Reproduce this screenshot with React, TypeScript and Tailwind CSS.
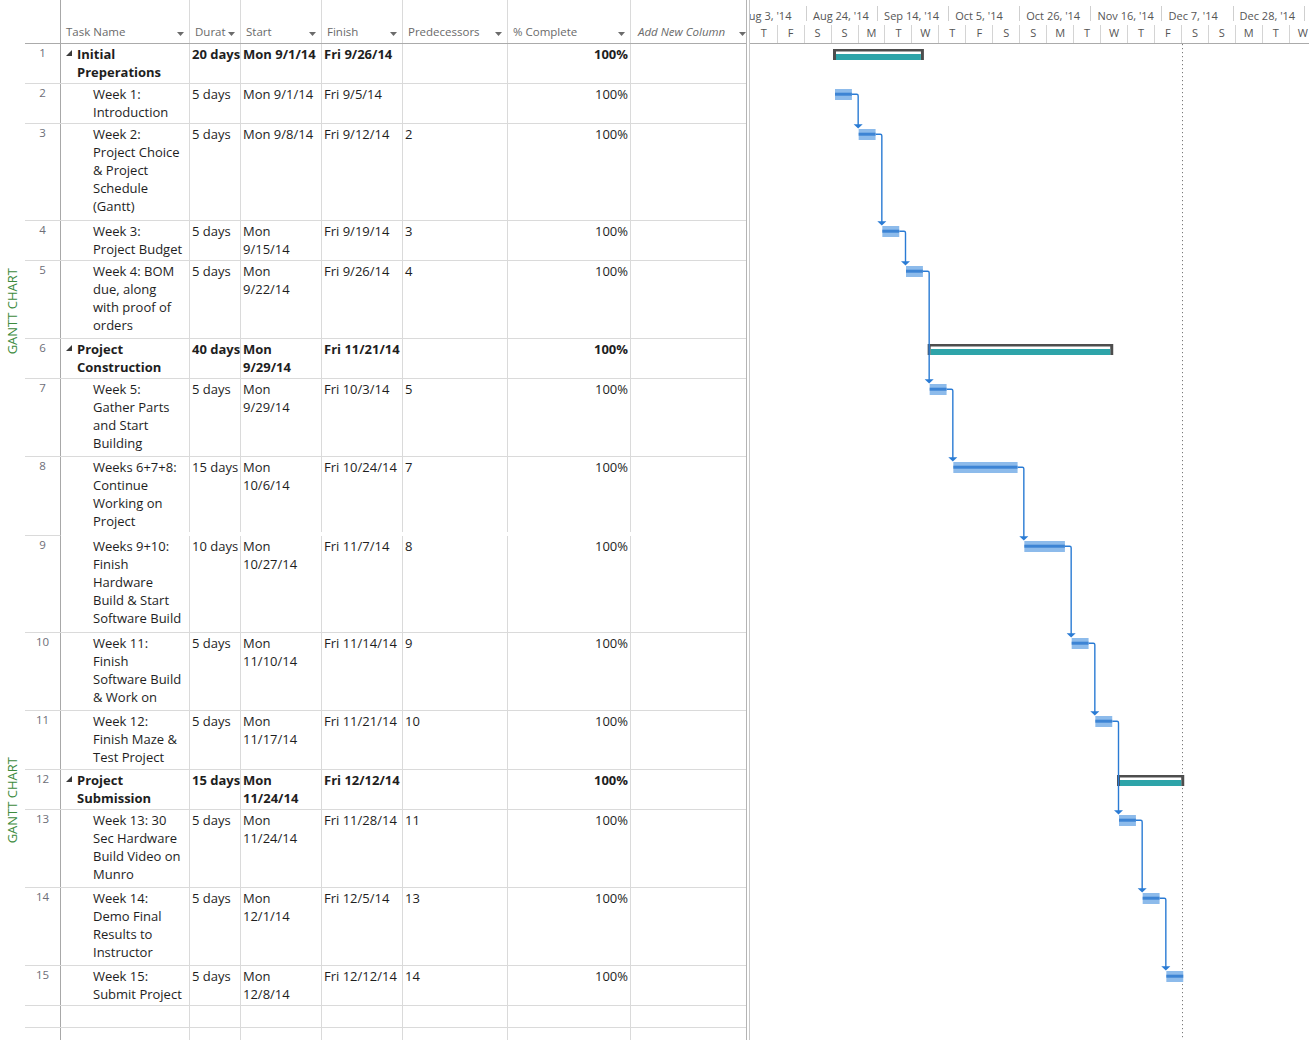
import React from "react";

type Row = {
  id: number;
  h: string;
  summary?: boolean;
  name: string[];
  dur: string;
  start: string[];
  finish: string;
  pred: string;
};

const rows: Row[] = [
  { id: 1, h: "h-[40px]", summary: true, name: ["Initial", "Preperations"], dur: "20 days", start: ["Mon 9/1/14"], finish: "Fri 9/26/14", pred: "" },
  { id: 2, h: "h-[40px]", name: ["Week 1:", "Introduction"], dur: "5 days", start: ["Mon 9/1/14"], finish: "Fri 9/5/14", pred: "" },
  { id: 3, h: "h-[97px]", name: ["Week 2:", "Project Choice", "& Project", "Schedule", "(Gantt)"], dur: "5 days", start: ["Mon 9/8/14"], finish: "Fri 9/12/14", pred: "2" },
  { id: 4, h: "h-[40px]", name: ["Week 3:", "Project Budget"], dur: "5 days", start: ["Mon", "9/15/14"], finish: "Fri 9/19/14", pred: "3" },
  { id: 5, h: "h-[78px]", name: ["Week 4: BOM", "due, along", "with proof of", "orders"], dur: "5 days", start: ["Mon", "9/22/14"], finish: "Fri 9/26/14", pred: "4" },
  { id: 6, h: "h-[40px]", summary: true, name: ["Project", "Construction"], dur: "40 days", start: ["Mon", "9/29/14"], finish: "Fri 11/21/14", pred: "" },
  { id: 7, h: "h-[78px]", name: ["Week 5:", "Gather Parts", "and Start", "Building"], dur: "5 days", start: ["Mon", "9/29/14"], finish: "Fri 10/3/14", pred: "5" },
  { id: 8, h: "h-[75px]", name: ["Weeks 6+7+8:", "Continue", "Working on", "Project"], dur: "15 days", start: ["Mon", "10/6/14"], finish: "Fri 10/24/14", pred: "7" },
  { id: 9, h: "h-[97px]", name: ["Weeks 9+10:", "Finish", "Hardware", "Build & Start", "Software Build"], dur: "10 days", start: ["Mon", "10/27/14"], finish: "Fri 11/7/14", pred: "8" },
  { id: 10, h: "h-[78px]", name: ["Week 11:", "Finish", "Software Build", "& Work on"], dur: "5 days", start: ["Mon", "11/10/14"], finish: "Fri 11/14/14", pred: "9" },
  { id: 11, h: "h-[59px]", name: ["Week 12:", "Finish Maze &", "Test Project"], dur: "5 days", start: ["Mon", "11/17/14"], finish: "Fri 11/21/14", pred: "10" },
  { id: 12, h: "h-[40px]", summary: true, name: ["Project", "Submission"], dur: "15 days", start: ["Mon", "11/24/14"], finish: "Fri 12/12/14", pred: "" },
  { id: 13, h: "h-[78px]", name: ["Week 13: 30", "Sec Hardware", "Build Video on", "Munro"], dur: "5 days", start: ["Mon", "11/24/14"], finish: "Fri 11/28/14", pred: "11" },
  { id: 14, h: "h-[78px]", name: ["Week 14:", "Demo Final", "Results to", "Instructor"], dur: "5 days", start: ["Mon", "12/1/14"], finish: "Fri 12/5/14", pred: "13" },
  { id: 15, h: "h-[40px]", name: ["Week 15:", "Submit Project"], dur: "5 days", start: ["Mon", "12/8/14"], finish: "Fri 12/12/14", pred: "14" },
];

// y of the grid line above each row (row index 1..15)
const LINES = [43, 83, 123, 220, 260, 338, 378, 456, 535, 632, 710, 769, 809, 887, 965, 1005];

// calendar day spans from Mon 9/1/14
const spans: Record<number, [number, number]> = {
  1: [0, 26],
  2: [0, 5],
  3: [7, 12],
  4: [14, 19],
  5: [21, 26],
  6: [28, 82],
  7: [28, 33],
  8: [35, 54],
  9: [56, 68],
  10: [70, 75],
  11: [77, 82],
  12: [84, 103],
  13: [84, 89],
  14: [91, 96],
  15: [98, 103],
};

const links: [number, number][] = [
  [2, 3], [3, 4], [4, 5], [5, 7], [7, 8], [8, 9], [9, 10], [10, 11], [11, 13], [13, 14], [14, 15],
];

const DAY = 3.381;
const X0 = 85; // svg x of Mon 9/1/14
const BODY_TOP = 44;

const dx = (d: number) => X0 + d * DAY;
const barTop = (id: number) => LINES[id - 1] + 6 - BODY_TOP;

const GRID = "grid grid-cols-[36px_129px_51px_81px_81px_105px_123px_115px] shrink-0";

function HeaderArrow() {
  return (
    <svg width="7" height="4" viewBox="0 0 7 4" className="shrink-0 mt-[8px]">
      <path d="M0 0H7L3.5 4Z" fill="#6b6b6b" />
    </svg>
  );
}

function SummaryTri() {
  return (
    <svg width="6" height="6" viewBox="0 0 6 6" className="shrink-0 mt-[5px]">
      <path d="M6 0V6H0Z" fill="#3a3a3a" />
    </svg>
  );
}

function Lines({ lines }: { lines: string[] }) {
  return (
    <>
      {lines.map((l, i) => (
        <div key={i} className="whitespace-nowrap">
          {l}
        </div>
      ))}
    </>
  );
}

function HeaderCell({ label, italic, last }: { label: string; italic?: boolean; last?: boolean }) {
  return (
    <div
      className={`flex items-start justify-between pt-[24px] ${last ? "pl-[7px] pr-0" : "border-r border-[#dadada] pl-[5px] pr-[5px]"}`}
    >
      <span className={`text-[11.5px] leading-[16px] text-[#6a6a6a] whitespace-nowrap ${italic ? "italic" : ""}`}>{label}</span>
      <HeaderArrow />
    </div>
  );
}

function TableRow({ r, noBottom }: { r: Row; noBottom?: boolean }) {
  const weight = r.summary ? "font-bold" : "font-normal";
  return (
    <div className={`${GRID} ${r.h} ${noBottom ? "" : "border-b border-[#dadada]"} text-[13px] leading-[18px] text-[#1e1e1e]`}>
      <div className="border-r border-[#a8a8a8] text-center text-[11.5px] leading-[18px] pt-0 text-[#6e6e78]">{r.id}</div>
      <div className={`border-r border-[#dadada] pt-[1px] overflow-hidden ${weight} ${r.summary ? "flex pl-[5px]" : "pl-[32px]"}`}>
        {r.summary ? (
          <>
            <SummaryTri />
            <div className="ml-[5px]">
              <Lines lines={r.name} />
            </div>
          </>
        ) : (
          <Lines lines={r.name} />
        )}
      </div>
      <div className={`border-r border-[#dadada] pt-[1px] pl-[2px] overflow-hidden whitespace-nowrap ${weight}`}>{r.dur}</div>
      <div className={`border-r border-[#dadada] pt-[1px] pl-[2px] overflow-hidden ${weight}`}>
        <Lines lines={r.start} />
      </div>
      <div className={`border-r border-[#dadada] pt-[1px] pl-[2px] overflow-hidden whitespace-nowrap ${weight}`}>{r.finish}</div>
      <div className={`border-r border-[#dadada] pt-[1px] pl-[2px] ${weight}`}>{r.pred}</div>
      <div className={`border-r border-[#dadada] pt-[1px] pr-[2px] text-right ${weight}`}>100%</div>
      <div />
    </div>
  );
}

function GapRow() {
  return (
    <div className={`${GRID} h-[4px]`}>
      <div className="border-r border-b border-[#a8a8a8] border-b-[#dadada]" />
      <div />
      <div />
      <div />
      <div />
      <div />
      <div />
      <div />
    </div>
  );
}

function EmptyRow({ h, bottom }: { h: string; bottom?: boolean }) {
  return (
    <div className={`${GRID} ${h} ${bottom ? "border-b border-[#dadada]" : ""}`}>
      <div className="border-r border-[#a8a8a8]" />
      <div className="border-r border-[#dadada]" />
      <div className="border-r border-[#dadada]" />
      <div className="border-r border-[#dadada]" />
      <div className="border-r border-[#dadada]" />
      <div className="border-r border-[#dadada]" />
      <div className="border-r border-[#dadada]" />
      <div />
    </div>
  );
}

const topLabels = ["Aug 3, '14", "Aug 24, '14", "Sep 14, '14", "Oct 5, '14", "Oct 26, '14", "Nov 16, '14", "Dec 7, '14", "Dec 28, '14", "Jan 18, '15"];
const dayLetters = "TFSSMTWTFSSMTWTFSSMTW".split("");

function GanttHeader() {
  return (
    <div className="h-[44px] shrink-0 border-b border-[#ababab] overflow-hidden text-[11px] text-[#555]">
      <div className="h-[25px] flex ml-[-14.1px]">
        {topLabels.map((l, i) => (
          <div key={i} className="w-[71.1px] shrink-0 flex">
            <div className="flex-1 pl-[6px] pt-[9px] leading-[14px] whitespace-nowrap overflow-hidden">{l}</div>
            <div className="w-px h-[15px] mt-[6px] bg-[#cfcfcf]" />
          </div>
        ))}
      </div>
      <div className="h-[18px] flex pl-[0.7px]">
        {dayLetters.map((d, i) => (
          <div key={i} className="w-[26.96px] shrink-0 border-r border-[#d4d4d4] text-center leading-[16px]">
            {d}
          </div>
        ))}
      </div>
    </div>
  );
}

function GanttBody() {
  const taskIds = [2, 3, 4, 5, 7, 8, 9, 10, 11, 13, 14, 15];
  const summaryIds = [1, 6, 12];
  return (
    <svg width="559" height="996" viewBox="0 0 559 996" className="block shrink-0">
      {/* status date dotted line */}
      <line x1="432.5" y1="0" x2="432.5" y2="996" stroke="#7a7a7a" strokeWidth="1" strokeDasharray="1.2 2.8" />
      {summaryIds.map((id) => {
        const [s, e] = spans[id];
        const x1 = dx(s) - 2;
        const x2 = dx(e) + 1;
        const y = barTop(id);
        return (
          <g key={id}>
            <rect x={x1} y={y} width={x2 - x1} height={11} fill="#4d4d4d" />
            <rect x={x1 + 3} y={y + 2.5} width={x2 - x1 - 6} height={8.5} fill="#ffffff" />
            <rect x={x1 + 3} y={y + 5} width={x2 - x1 - 6} height={6} fill="#2ea4a9" />
          </g>
        );
      })}
      {links.map(([a, b]) => {
        const [, ea] = spans[a];
        const [sb] = spans[b];
        const xa = dx(ea);
        const ya = barTop(a) + 5.3;
        const vx = dx(sb) - 0.5;
        const yb = barTop(b);
        return (
          <g key={`${a}-${b}`}>
            <path
              d={`M${xa} ${ya} H${vx - 1.5} Q${vx} ${ya} ${vx} ${ya + 1.5} V${yb - 4}`}
              fill="none"
              stroke="#2a7bd4"
              strokeWidth="1.4"
            />
            <path d={`M${vx - 4.5} ${yb - 4.8} H${vx + 4.5} L${vx} ${yb - 0.4} Z`} fill="#2a7bd4" />
          </g>
        );
      })}
      {taskIds.map((id) => {
        const [s, e] = spans[id];
        const x1 = dx(s);
        const x2 = dx(e);
        const y = barTop(id);
        return (
          <g key={id}>
            <rect x={x1} y={y} width={x2 - x1} height={11} fill="#8dbbeb" />
            <rect x={x1} y={y + 3.7} width={x2 - x1} height={3} fill="#3d84d4" />
          </g>
        );
      })}
    </svg>
  );
}

export default function App() {
  return (
    <div className="w-[1309px] h-[1040px] flex bg-white overflow-hidden font-['Open_Sans',sans-serif]">
      {/* Left view bar */}
      <div className="w-[25px] shrink-0 flex flex-col items-center">
        <div className="mt-[268px] shrink-0 [writing-mode:vertical-rl] rotate-180 text-[13px] leading-[25px] text-[#3d8b3d] whitespace-nowrap">
          GANTT CHART
        </div>
        <div className="mt-[403px] shrink-0 [writing-mode:vertical-rl] rotate-180 text-[13px] leading-[25px] text-[#3d8b3d] whitespace-nowrap">
          GANTT CHART
        </div>
      </div>

      {/* Table */}
      <div className="w-[721px] shrink-0 flex flex-col">
        <div className={`${GRID} h-[44px] border-b border-[#ababab]`}>
          <div className="border-r border-[#a8a8a8]" />
          <HeaderCell label="Task Name" />
          <HeaderCell label="Durat" />
          <HeaderCell label="Start" />
          <HeaderCell label="Finish" />
          <HeaderCell label="Predecessors" />
          <HeaderCell label="% Complete" />
          <HeaderCell label="Add New Column" italic last />
        </div>
        {rows.map((r) =>
          r.id === 8 ? (
            <React.Fragment key={r.id}>
              <TableRow r={r} noBottom />
              <GapRow />
            </React.Fragment>
          ) : (
            <TableRow key={r.id} r={r} />
          )
        )}
        <EmptyRow h="h-[22px]" bottom />
        <EmptyRow h="h-[40px]" />
      </div>

      {/* Split bar */}
      <div className="w-[4px] shrink-0 border-l border-r border-l-[#b4b4b4] border-r-[#c8c8c8]" />

      {/* Gantt chart */}
      <div className="w-[559px] shrink-0 flex flex-col">
        <GanttHeader />
        <GanttBody />
      </div>
    </div>
  );
}
